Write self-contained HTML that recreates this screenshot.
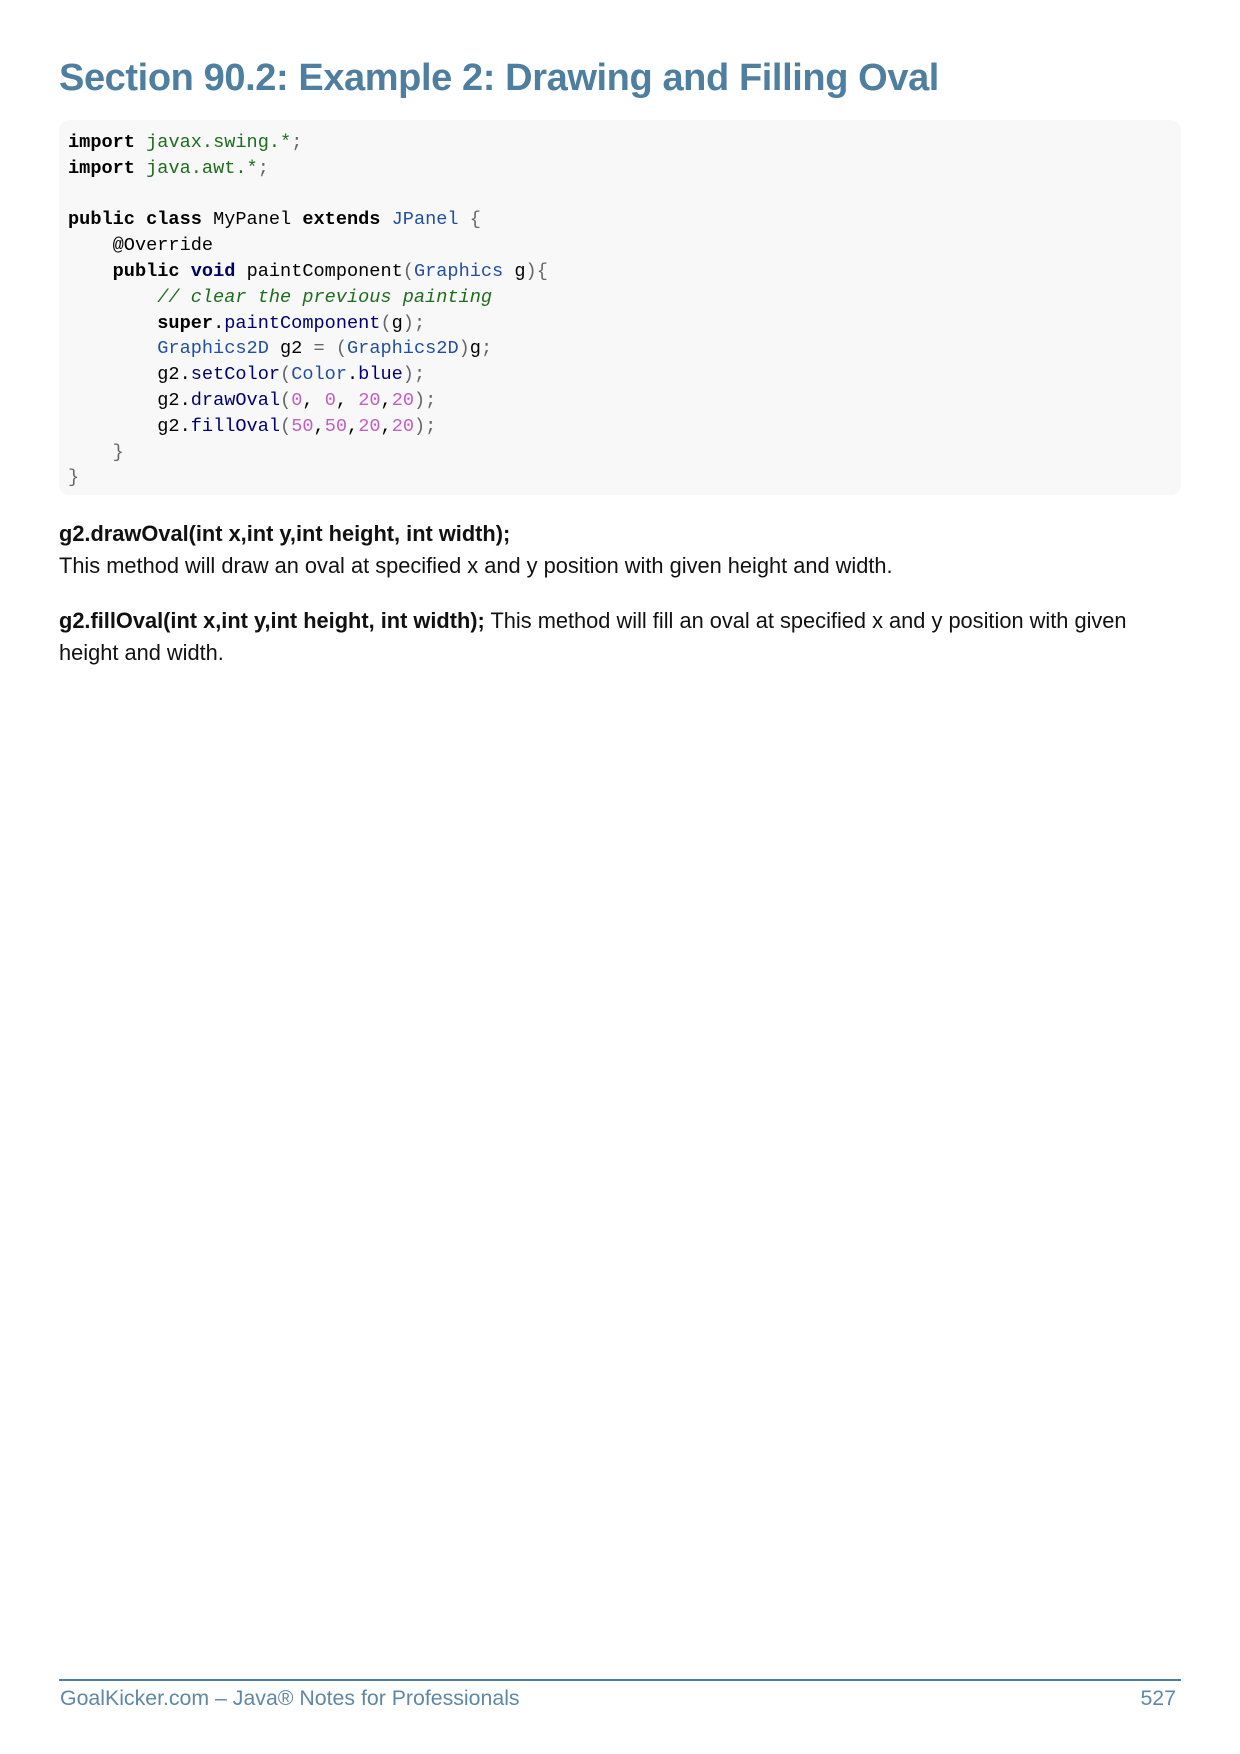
<!DOCTYPE html>
<html><head><meta charset="utf-8"><style>
body{margin:0;background:#fff;width:1240px;height:1754px;position:relative;overflow:hidden;font-family:"Liberation Sans",sans-serif}
h1{position:absolute;left:59px;top:57px;margin:0;font-size:38px;font-weight:bold;color:#4f7fa0;white-space:nowrap;letter-spacing:-0.4px}
.code{position:absolute;left:59px;top:120px;width:1122px;height:375px;background:#f8f8f8;border-radius:10px}
pre{margin:0;padding:10px 0 0 9px;font-family:"Liberation Mono",monospace;font-size:18.6px;line-height:25.8px;color:#000}
.k{font-weight:bold}.n{font-weight:bold;color:#000066}.g{color:#1b6e1b}.t{color:#1f4f9e}.m{color:#000070}.d{color:#c060c0}.p{color:#666}.c{color:#1b6e1b;font-style:italic}
.txt{position:absolute;left:59px;font-size:21.8px;color:#111;line-height:32px;width:1125px}
.foot{position:absolute;left:59px;top:1679px;width:1122px;border-top:2px solid #4f7fa0}
.ft{position:absolute;top:1686px;font-size:21.3px;color:#5f88a5}
</style></head><body>
<h1>Section 90.2: Example 2: Drawing and Filling Oval</h1>
<div class="code"><pre><span class="k">import</span> <span class="g">javax.swing.*</span><span class="p">;</span>
<span class="k">import</span> <span class="g">java.awt.*</span><span class="p">;</span>

<span class="k">public class</span> MyPanel <span class="k">extends</span> <span class="t">JPanel</span> <span class="p">{</span>
    @Override
    <span class="k">public</span> <span class="n">void</span> paintComponent<span class="p">(</span><span class="t">Graphics</span> g<span class="p">){</span>
        <span class="c">// clear the previous painting</span>
        <span class="k">super</span>.<span class="m">paintComponent</span><span class="p">(</span>g<span class="p">);</span>
        <span class="t">Graphics2D</span> g2 <span class="p">=</span> <span class="p">(</span><span class="t">Graphics2D</span><span class="p">)</span>g<span class="p">;</span>
        g2.<span class="m">setColor</span><span class="p">(</span><span class="t">Color</span>.<span class="m">blue</span><span class="p">);</span>
        g2.<span class="m">drawOval</span><span class="p">(</span><span class="d">0</span>, <span class="d">0</span>, <span class="d">20</span>,<span class="d">20</span><span class="p">);</span>
        g2.<span class="m">fillOval</span><span class="p">(</span><span class="d">50</span>,<span class="d">50</span>,<span class="d">20</span>,<span class="d">20</span><span class="p">);</span>
    <span class="p">}</span>
<span class="p">}</span></pre></div>
<div class="txt" style="top:518px"><b>g2.drawOval(int x,int y,int height, int width);</b><br>This method will draw an oval at specified x and y position with given height and width.</div>
<div class="txt" style="top:605px"><b>g2.fillOval(int x,int y,int height, int width);</b> This method will fill an oval at specified x and y position with given height and width.</div>
<div class="foot"></div>
<div class="ft" style="left:60px">GoalKicker.com – Java® Notes for Professionals</div>
<div class="ft" style="right:64px">527</div>
</body></html>
